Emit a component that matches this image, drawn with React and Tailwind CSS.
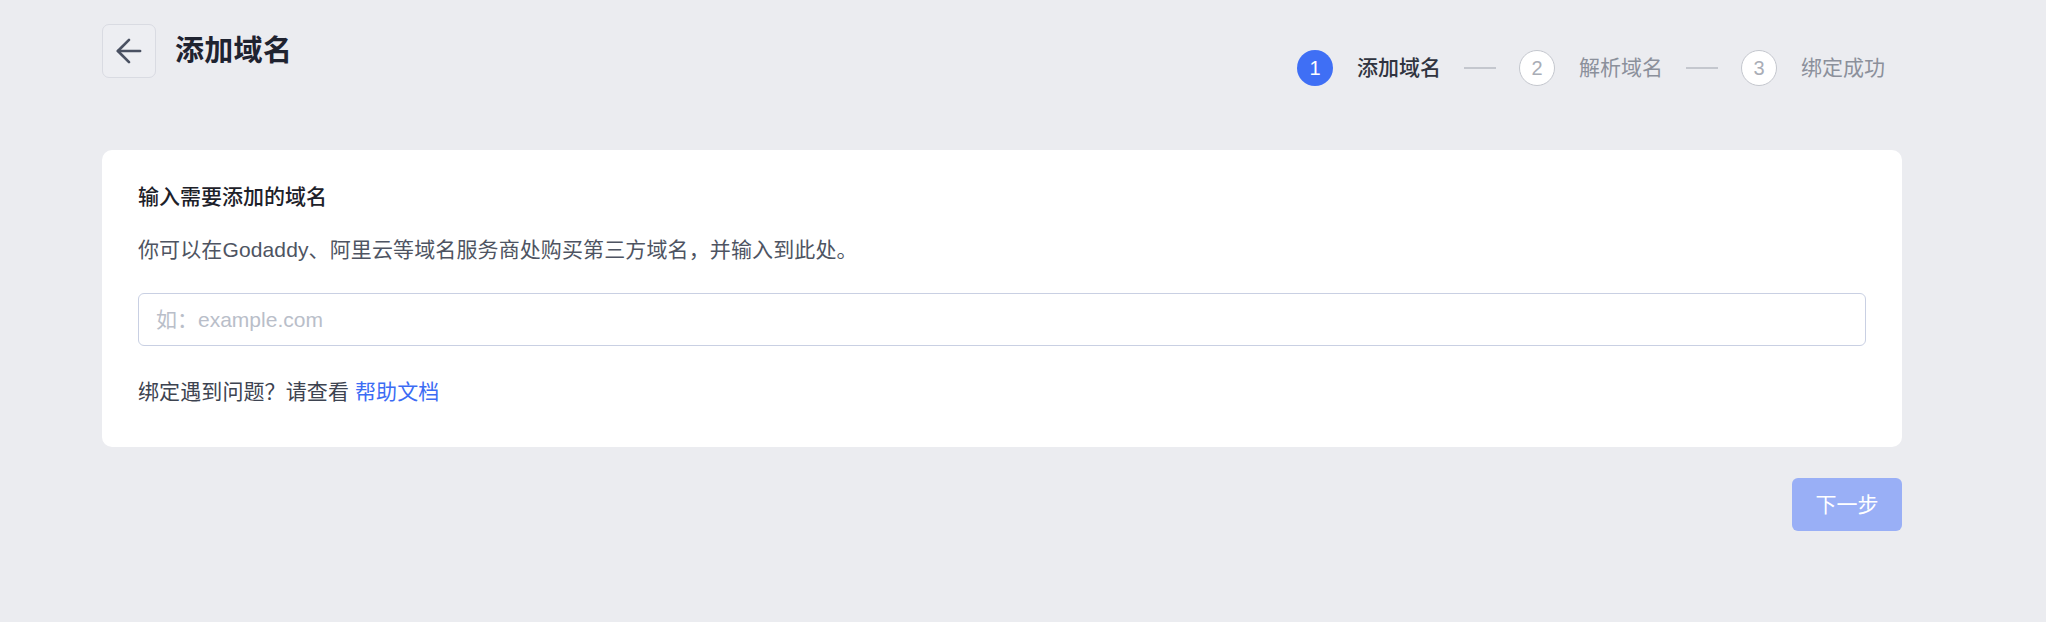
import React from "react";
import { ArrowLeft } from "lucide-react";

const steps = [
  { n: 1, label: "添加域名", active: true },
  { n: 2, label: "解析域名" },
  { n: 3, label: "绑定成功" },
];

const Steps = () => (
  <div className="mt-[26px] flex items-center gap-[23px] pr-[17px]">
    {steps.map((s, i) => (
      <React.Fragment key={s.n}>
        {i > 0 && <div className="h-[2px] w-[32px] bg-[#c4c7ce]" />}
        <div className="flex items-center gap-[24px]">
          <div
            className={
              s.active
                ? "flex h-[36px] w-[36px] items-center justify-center rounded-full bg-[#3f6ff5] text-[20px] font-light text-white"
                : "flex h-[36px] w-[36px] items-center justify-center rounded-full border border-[#c4c7ce] bg-white text-[20px] font-light text-[#a9adb6]"
            }
          >
            {s.n}
          </div>
          <span
            className={
              s.active
                ? "text-[21px] font-medium text-[#30343f]"
                : "text-[21px] text-[#8b909b]"
            }
          >
            {s.label}
          </span>
        </div>
      </React.Fragment>
    ))}
  </div>
);

export default function App() {
  return (
    <div
      className="min-h-screen w-full bg-[#ebecf0] pt-6"
      style={{ fontFamily: '"Liberation Sans", "Noto Sans CJK SC", sans-serif' }}
    >
      <div className="ml-[102px] w-[1800px]">
        <div className="flex items-start justify-between">
          <div className="flex items-center gap-[19px]">
            <button className="flex h-[54px] w-[54px] items-center justify-center rounded-[7px] border border-[#d9dbe2] bg-[#edeef2] text-[#4a5162]">
              <ArrowLeft size={38} strokeWidth={1.7} />
            </button>
            <h1 className="text-[29px] font-semibold leading-none tracking-[0.3px] text-[#1f2330]">添加域名</h1>
          </div>
          <Steps />
        </div>

        <div className="mt-[64px] rounded-[10px] bg-white px-[36px] pb-[41px] pt-[36px]">
          <div className="text-[21px] font-medium leading-[22px] text-[#1d2129]">
            输入需要添加的域名
          </div>
          <p className="mt-[27px] text-[21px] leading-[29px] tracking-[0.12px] text-[#4e5462]">
            你可以在Godaddy、阿里云等域名服务商处购买第三方域名，并输入到此处。
          </p>
          <input
            className="mt-[29px] block h-[53px] w-full rounded-[6px] border border-[#c9d0e3] bg-white px-[17px] text-[21px] text-[#1d2129] outline-none placeholder:text-[#b9bec9]"
            placeholder="如：example.com"
          />
          <p className="mt-[31px] text-[21px] leading-[29px] tracking-[0.1px] text-[#3d4350]">
            绑定遇到问题？请查看 <a className="text-[#3c6cf4]">帮助文档</a>
          </p>
        </div>

        <div className="mt-[31px] flex justify-end">
          <button className="h-[53px] w-[110px] rounded-[6px] bg-[#99aff6] text-[21px] text-white">
            下一步
          </button>
        </div>
      </div>
    </div>
  );
}
